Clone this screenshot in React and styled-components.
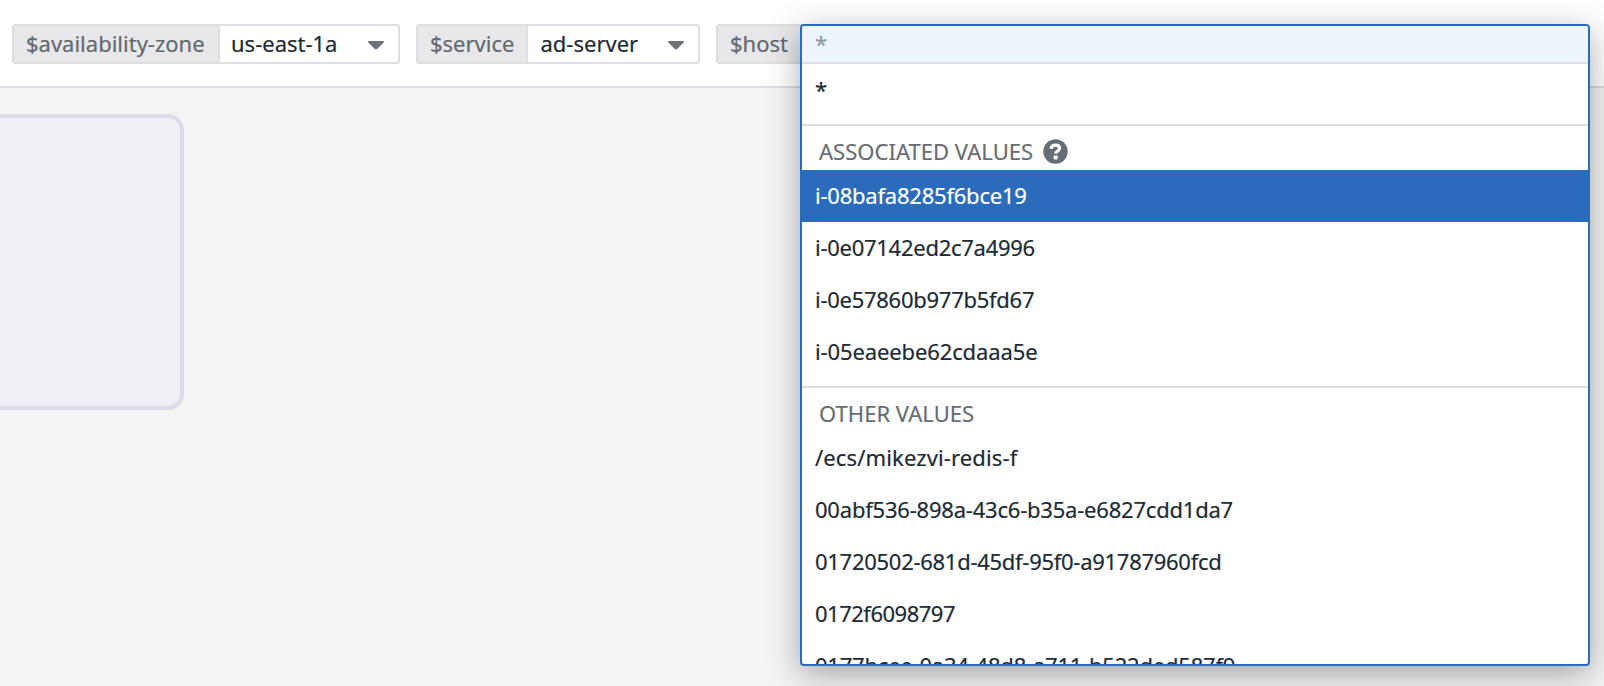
import React from 'react';
import styled, { createGlobalStyle } from 'styled-components';

const GlobalStyle = createGlobalStyle`
  *, *::before, *::after { box-sizing: border-box; }
  html, body, #root { height: 100%; }
  body {
    margin: 0;
    overflow: hidden;
    background: #f4f4f4;
    color: #1c2b34;
    font-family: "Noto Sans", sans-serif;
    font-size: 22px;
    line-height: 30px;
    -webkit-text-stroke: 0.2px;
  }
`;

const Page = styled.div`
  display: flex;
  flex-direction: column;
  height: 100%;
`;

const Toolbar = styled.header`
  display: flex;
  align-items: flex-start;
  gap: 16px;
  height: 88px;
  flex: none;
  padding: 24px 14px 0 12px;
  background: #fff;
  border-bottom: 2px solid #dddde2;
`;

const Variable = styled.div`
  position: relative;
  display: flex;
  flex: none;
  width: ${(p) => p.$width}px;
  height: 40px;
  border: 2px solid #dddde2;
  border-radius: 4px;
  background: #fff;
`;

const VariableName = styled.span`
  flex: none;
  width: ${(p) => p.$width}px;
  padding: 2px 0 0 12px;
  background: #e8e8eb;
  border-right: 2px solid #dddde2;
  color: #63696f;
  white-space: nowrap;
`;

const VariableValue = styled.span`
  display: flex;
  flex: 1;
  align-items: flex-start;
  justify-content: space-between;
  padding: 2px 14px 0 ${(p) => p.$inset}px;
`;

const Caret = styled.svg`
  width: 16px;
  height: 9px;
  margin-top: 13px;
  fill: #6c7378;
`;

const Dropdown = styled.div`
  position: absolute;
  top: -2px;
  left: 82px;
  z-index: 1;
  display: flex;
  flex-direction: column;
  width: 790px;
  height: 642px;
  overflow: hidden;
  background: #fff;
  border: 2px solid #2a6bbb;
  border-radius: 4px;
  box-shadow: 0 8px 32px rgba(0, 0, 0, 0.34);
`;

const Search = styled.div`
  flex: none;
  height: 38px;
  padding: 2px 13px 0;
  background: #ecf4fc;
  border-bottom: 2px solid #dddde2;
  color: #8f999f;
`;

const Group = styled.section`
  flex: none;
  padding-bottom: 8px;

  & + & { border-top: 2px solid #dddde2; }
`;

const GroupTitle = styled.h2`
  display: flex;
  align-items: flex-start;
  gap: 10px;
  height: 44px;
  margin: 0;
  padding: 10px 17px 0;
  color: #676d73;
  font-size: 22px;
  font-weight: 400;
  letter-spacing: 0.03px;
`;

const HelpIcon = styled.svg`
  width: 25px;
  height: 25px;
  margin-top: 3px;
`;

const Option = styled.div`
  height: 52px;
  padding: 10px 13px;
  background: ${(p) => (p.$active ? '#2a6bbb' : 'transparent')};
  color: ${(p) => (p.$active ? '#fff' : 'inherit')};
  letter-spacing: ${(p) => p.$tracking || 0}px;
  white-space: nowrap;
`;

const Canvas = styled.main`
  flex: 1;
  padding-top: 26px;
`;

const GroupCard = styled.div`
  width: 184px;
  height: 296px;
  background: #f1eff4;
  border: 4px solid #dfdae7;
  border-left: 0;
  border-radius: 0 16px 16px 0;
`;

const associated = [
  { host: 'i-08bafa8285f6bce19', tracking: -0.22 },
  { host: 'i-0e07142ed2c7a4996', tracking: -0.27 },
  { host: 'i-0e57860b977b5fd67', tracking: -0.27 },
  { host: 'i-05eaeebe62cdaaa5e', tracking: -0.12 },
];

const others = [
  { host: '/ecs/mikezvi-redis-f', tracking: 0.13 },
  { host: '00abf536-898a-43c6-b35a-e6827cdd1da7', tracking: -0.21 },
  { host: '01720502-681d-45df-95f0-a91787960fcd', tracking: -0.28 },
  { host: '0172f6098797', tracking: -0.5 },
  { host: '0177bcee-0a34-48d8-a711-b522ded587f9', tracking: -0.21 },
];

function SelectVariable({ name, value, width, nameWidth, inset }) {
  return (
    <Variable $width={width}>
      <VariableName $width={nameWidth}>{name}</VariableName>
      <VariableValue $inset={inset}>
        {value}
        <Caret viewBox="0 0 16 9">
          <path d="M.9 0h14.2c.8 0 1.2.9.6 1.4L9.2 8.1c-.7.6-1.7.6-2.4 0L.3 1.4C-.3.9.1 0 .9 0z" />
        </Caret>
      </VariableValue>
    </Variable>
  );
}

export default function App() {
  return (
    <Page>
      <GlobalStyle />
      <Toolbar>
        <SelectVariable name="$availability-zone" value="us-east-1a" width={388} nameWidth={206} inset={11} />
        <SelectVariable name="$service" value="ad-server" width={284} nameWidth={110} inset={12.5} />
        <Variable $width={872}>
          <VariableName $width={84}>$host</VariableName>
          <Dropdown>
            <Search>*</Search>
            <Group>
              <Option>*</Option>
            </Group>
            <Group>
              <GroupTitle>
                ASSOCIATED VALUES
                <HelpIcon viewBox="0 0 25 25">
                  <circle cx="12.5" cy="12.5" r="12.2" fill="#676d73" />
                  <path
                    d="M8 9.7C8.5 7.1 10.1 6.2 12.5 6.2c2.5 0 4 1.1 4 3.1 0 2.9-3.8 2.6-3.8 5.3"
                    fill="none"
                    stroke="#fff"
                    strokeWidth="3.3"
                  />
                  <rect x="10.7" y="16.5" width="4" height="3.9" rx=".8" fill="#fff" />
                </HelpIcon>
              </GroupTitle>
              {associated.map(({ host, tracking }, i) => (
                <Option key={host} $active={i === 0} $tracking={tracking}>{host}</Option>
              ))}
            </Group>
            <Group>
              <GroupTitle>OTHER VALUES</GroupTitle>
              {others.map(({ host, tracking }) => (
                <Option key={host} $tracking={tracking}>{host}</Option>
              ))}
            </Group>
          </Dropdown>
        </Variable>
      </Toolbar>
      <Canvas>
        <GroupCard />
      </Canvas>
    </Page>
  );
}
